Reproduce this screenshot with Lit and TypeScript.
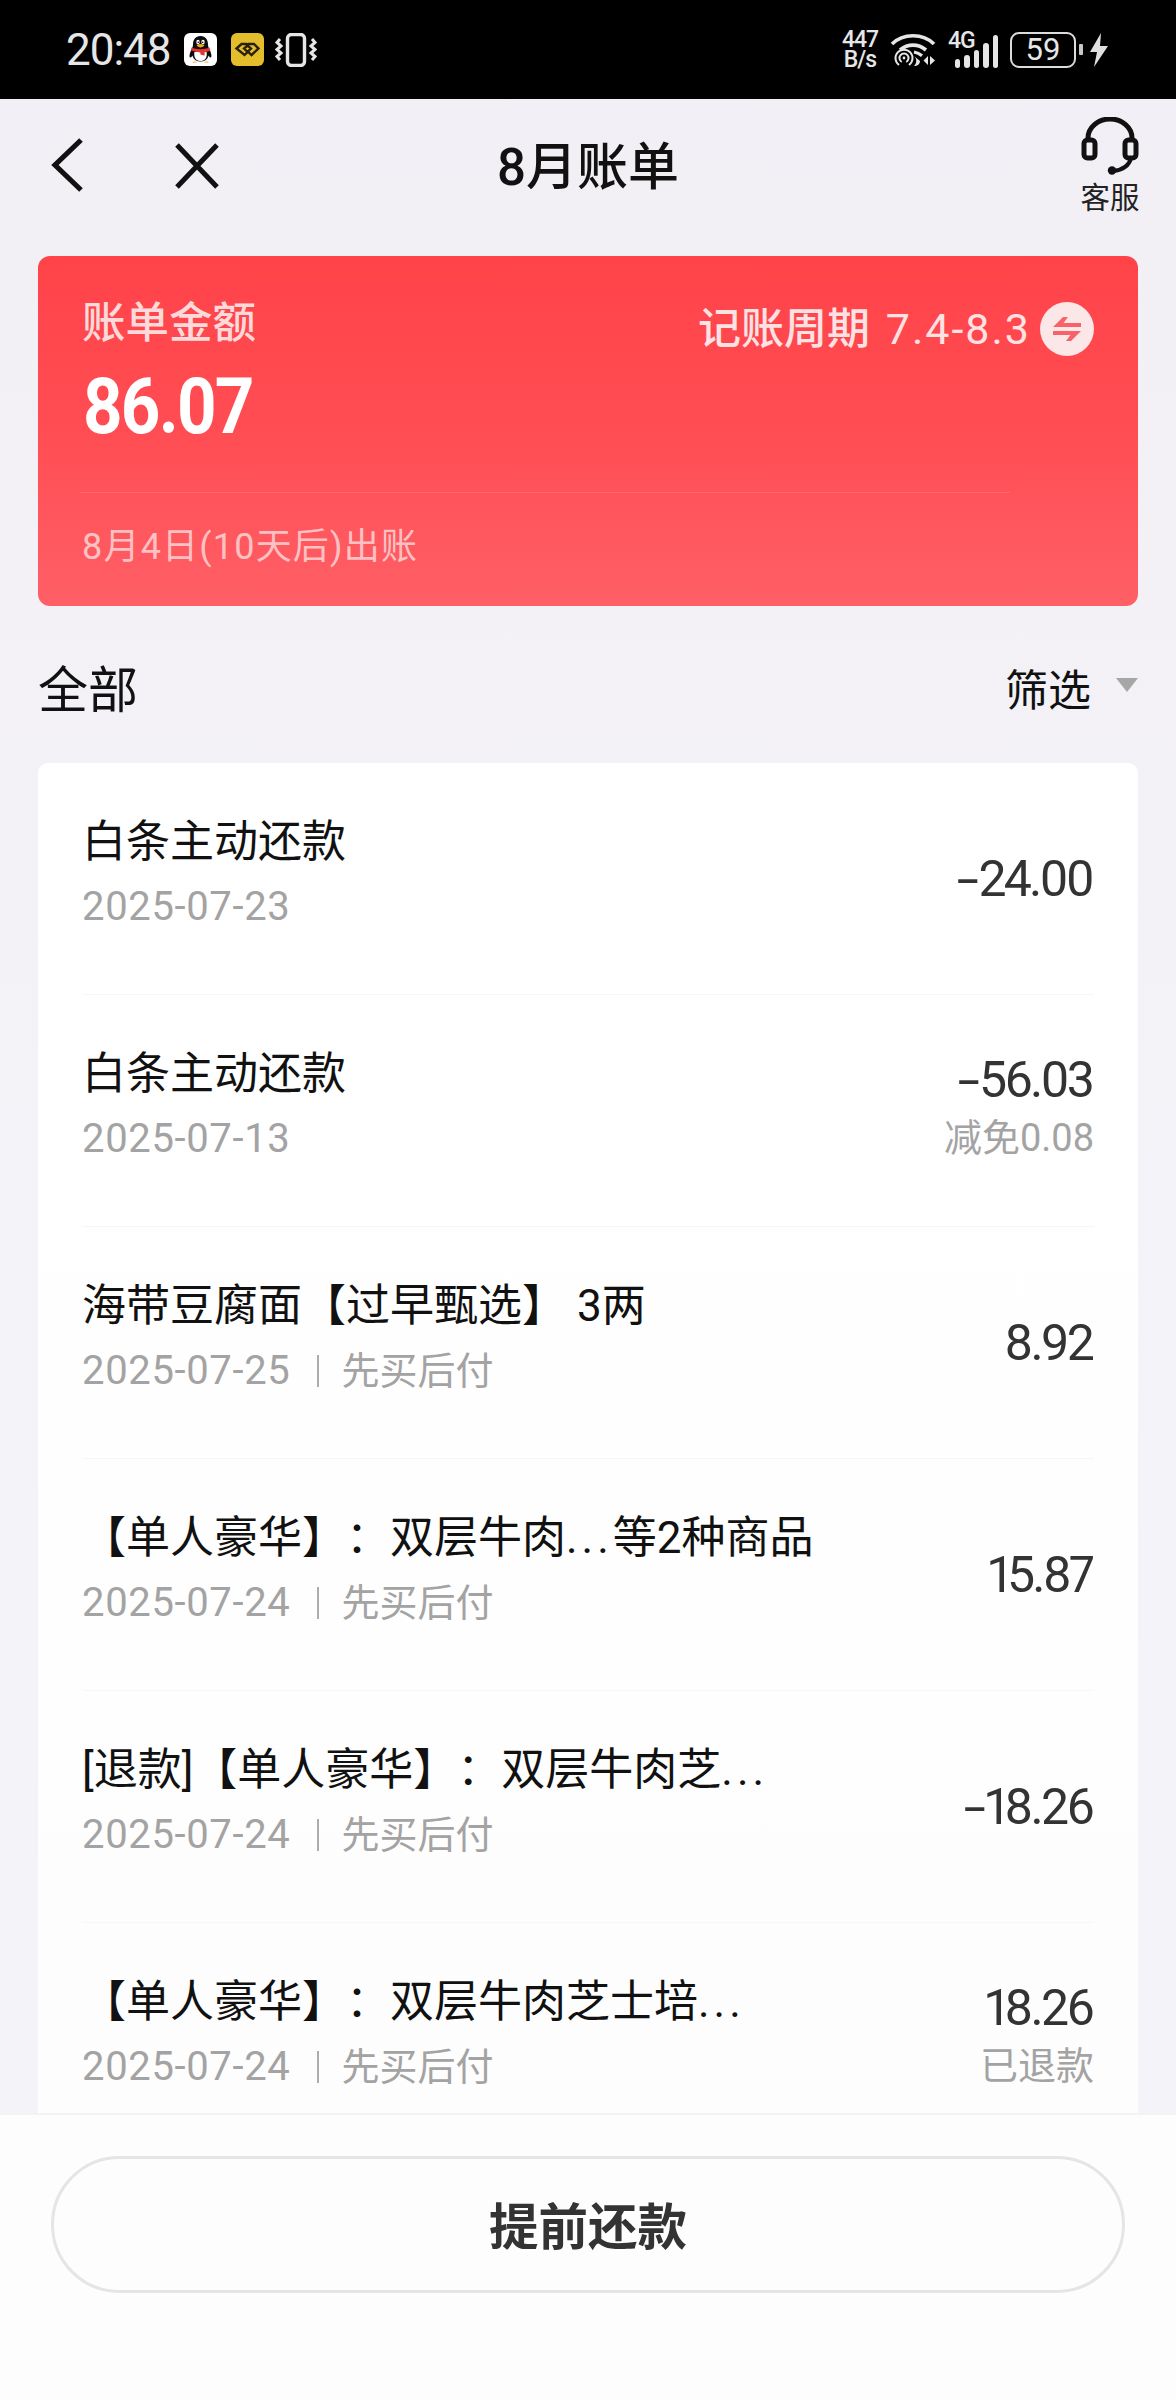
import { LitElement, html, css, svg } from "lit";
import { customElement } from "lit/decorators.js";

interface Row { title: string; date: string; tag?: string; amount: string; note?: string; }

const ROWS: Row[] = [
  { title: "白条主动还款", date: "2025-07-23", amount: "-24.00" },
  { title: "白条主动还款", date: "2025-07-13", amount: "-56.03", note: "减免0.08" },
  { title: "海带豆腐面【过早甄选】 3两", date: "2025-07-25", tag: "先买后付", amount: "8.92" },
  { title: "【单人豪华】：双层牛肉...等2种商品", date: "2025-07-24", tag: "先买后付", amount: "15.87" },
  { title: "[退款]【单人豪华】：双层牛肉芝...", date: "2025-07-24", tag: "先买后付", amount: "-18.26" },
  { title: "【单人豪华】：双层牛肉芝士培...", date: "2025-07-24", tag: "先买后付", amount: "18.26", note: "已退款" },
];

const qq = svg`<svg width="33" height="33" viewBox="0 0 33 33">
  <rect width="33" height="33" rx="6" fill="#fff"/>
  <path d="M16.5 3c-5 0-7.5 4-7.5 8.500 0 2-.6 3-2 6-1.500 3.500-2 6.500-.8 7 .8.300 1.800-1 2.300-2 .5 2 1.500 3.600 3 4.800 3 1.700 7 1.700 10 0 1.500-1.200 2.500-2.800 3-4.800.5 1 1.500 2.300 2.300 2 1.200-.5.7-3.500-.8-7-1.400-3-2-4-2-6C24 7 21.500 3 16.500 3z" fill="#0b0b0f"/>
  <path d="M10.500 19c-1 4 .5 9 6 9s7-5 6-9z" fill="#fff"/>
  <path d="M7.500 14.500c5 2.200 13 2.200 18 0l.8 3c-2 1-4 1.600-5.800 1.800l.2 3.200-4-.8-.5-2.300c-3.500-.2-6.500-.8-9.300-2.100z" fill="#e5352c"/>
  <ellipse cx="14" cy="9" rx="1.700" ry="2.300" fill="#fff"/><ellipse cx="19" cy="9" rx="1.700" ry="2.300" fill="#fff"/>
  <circle cx="14.300" cy="9.300" r=".8" fill="#000"/><circle cx="18.700" cy="9.300" r=".8" fill="#000"/>
  <path d="M12.500 12c2.500-1.200 5.500-1.200 8 0-1 1.800-2.500 2.400-4 2.400s-3-.6-4-2.400z" fill="#f3a81c"/>
  <path d="M8 29.500c1-1.500 3.500-1.500 5 0zM20 29.500c1.500-1.500 4-1.500 5 0z" fill="#f3a81c"/>
</svg>`;

const yellow = svg`<svg width="33" height="33" viewBox="0 0 33 33">
  <rect width="33" height="33" rx="6" fill="#e3bd2b"/>
  <path d="M5.500 15.500l5-4.500h5l1 1 1-1h5.500l4.500 4.500-7 6.500-3.500-3.300-3.500 3.300z M13 15.500l3.500 3.300 3.500-3.300-3.500-3z" fill="none" stroke="#2a2208" stroke-width="2.400" stroke-linejoin="miter"/>
</svg>`;

const vibrate = svg`<svg width="42" height="34" viewBox="0 0 42 34" fill="none" stroke="#e6e6e6">
  <rect x="12.500" y="1.500" width="17" height="31" rx="4" stroke-width="3.400"/>
  <path d="M5 6l-3 3.500L6 13l-4 3.500 4 3.500-4 3.500L5 27" stroke-width="3"/>
  <path d="M37 6l3 3.500-4 3.500 4 3.500-4 3.500 4 3.500L37 27" stroke-width="3"/>
</svg>`;

const wifi = svg`<svg width="46" height="36" viewBox="0 0 46 36" fill="none" stroke="#e6e6e6">
  <path d="M2 12C13 1 33 1 44 12" stroke-width="3.600"/>
  <path d="M10 18c8-6.500 18-6.500 26 0" stroke-width="3.600"/>
  <path d="M24 20c3 .6 5.500 1.700 8 3.800" stroke-width="3.200"/>
  <path d="M9 33a8.500 8.500 0 1 1 10 0" stroke-width="2"/>
  <path d="M11.800 30a4.500 4.500 0 1 1 4.400 0" stroke-width="2"/>
  <circle cx="14" cy="26" r="1.400" fill="#e6e6e6" stroke="none"/>
  <path d="M24 24c3 2.500 3 7 0 10 3.500 0 6-2 6-5z" fill="#e6e6e6" stroke="none"/>
  <path d="M38 24v9l-4.500-4.500zM40 24l5 4.500-5 4.500z" fill="#e6e6e6" stroke="none"/>
</svg>`;

const bolt = svg`<svg width="18" height="34" viewBox="0 0 18 34"><path d="M11 0L0 19h7l-3 15L18 13h-8z" fill="#e0e0e0"/></svg>`;

const back = svg`<svg width="32" height="54" viewBox="0 0 32 54" fill="none" stroke="#111" stroke-width="5.200"><path d="M30 2L4 27l26 25"/></svg>`;
const close = svg`<svg width="44" height="46" viewBox="0 0 44 46" fill="none" stroke="#111" stroke-width="5"><path d="M2 2l40 42M42 2L2 44"/></svg>`;

const headset = svg`<svg width="58" height="58" viewBox="0 0 58 58" fill="none" stroke="#111">
  <path d="M7 23V21a22 19 0 0 1 44 0v2" stroke-width="5"/>
  <rect x="3" y="23" width="11" height="18" rx="3.500" stroke-width="5"/>
  <rect x="44" y="23" width="11" height="18" rx="3.500" stroke-width="5"/>
  <path d="M50 41c-2 8-8 12-18 13" stroke-width="4"/>
  <circle cx="31" cy="53.500" r="4.200" fill="#111" stroke="none"/>
</svg>`;

const swap = svg`<svg width="54" height="54" viewBox="0 0 54 54">
  <circle cx="27" cy="27" r="27" fill="#fbe6e8"/>
  <path d="M13 25L23 15H28L23.500 21H41V25ZM41 29L31 39H26L30.500 33H13V29Z" fill="#f8636a"/>
</svg>`;

@customElement("app-root")
export class AppRoot extends LitElement {
  static styles = css`
    :host {
      display: block;
      width: 1176px;
      height: 2400px;
      overflow: hidden;
      position: relative;
      font-family: Roboto, "Noto Sans CJK SC", sans-serif;
      text-spacing-trim: space-all;
      background: linear-gradient(180deg, #f1eff5 0, #f3f1f5 500px, #f3f3f9 1400px, #f3f3f9 100%);
    }
    .status {
      height: 99px;
      background: #000;
      color: #e6e6e6;
      display: flex;
      align-items: center;
      padding: 0 68px 0 66px;
      box-sizing: border-box;
      justify-content: space-between;
    }
    .sl, .sr { display: flex; align-items: center; }
    .time { font-size: 44px; width: 118px; line-height: 34px; letter-spacing: -1px; font-weight: 400; }
    .ic1 { display: flex; }
    .ic2 { margin-left: 14px; display: flex; }
    .ic3 { margin-left: 11px; display: flex; }
    .speed {
      width: 42px; font-size: 23px; line-height: 20px; font-weight: 500;
      text-align: center; letter-spacing: -1px;
    }
    .wifi { margin-left: 9px; display: flex; }
    .sig { margin-left: 12px; position: relative; width: 50px; height: 36px; }
    .sig-t { position: absolute; left: 0; top: -2px; font-size: 23px; font-weight: 500; line-height: 22px; letter-spacing: -1px; }
    .bars { position: absolute; left: 7px; right: 0; bottom: 0; display: flex; gap: 4px; align-items: flex-end; }
    .bars i { width: 5.500px; background: #e6e6e6; border-radius: 3px; display: block; }
    .bar1 { height: 9px; } .bar2 { height: 13px; } .bar3 { height: 18px; } .bar4 { height: 25px; } .bar5 { height: 33px; }
    .bat {
      margin-left: 12px; width: 66px; height: 36px; box-sizing: border-box; border: 2.500px solid #dcdcdc;
      border-radius: 9px; display: flex; align-items: center; justify-content: center;
      font-size: 31px; line-height: 30px; color: #e6e6e6;
    }
    .nub { width: 4px; height: 11px; background: #c8c8c8; margin-left: 3px; border-radius: 1px; }
    .bolt { margin-left: 7px; display: flex; }

    .nav { height: 157px; display: flex; align-items: flex-start; position: relative; }
    .nav-back { display: flex; margin: 39px 0 0 51px; }
    .nav-close { display: flex; margin: 44px 0 0 92px; }
    .nav-title {
      position: absolute; left: 0; right: 0; top: 41px; text-align: center;
      font-size: 51px; line-height: 56px; font-weight: 500; color: #111;
    }
    .nav-help {
      position: absolute; right: 36px; top: 18px; width: 60px; display: flex; flex-direction: column; align-items: center;
      font-size: 29.500px; line-height: 40px; color: #222;
    }
    .nav-help svg { display: block; }
    .nav-help span { margin-top: 3px; white-space: nowrap; }

    .summary {
      margin: 0 38px; height: 350px; box-sizing: border-box; border-radius: 12px;
      background: linear-gradient(180deg, #ff4349 0, #ff4d53 50%, #ff5f66 100%);
      padding: 44px 45px 0; position: relative; color: #fff;
    }
    .sum-top { display: flex; justify-content: space-between; align-items: flex-start; }
    .sum-label { font-size: 43.500px; line-height: 50px; color: #fdd9da; margin: -1px 0 0 -1px; font-weight: 500; }
    .cycle { display: flex; align-items: center; font-size: 43px; line-height: 54px; color: #fde2e3; margin-top: 2px; gap: 9px; margin-right: -1px; font-weight: 500; }
    .cycle > span { white-space: nowrap; }
    .cycle b { font-weight: 400; letter-spacing: 2px; margin-left: 5px; }
    .cycle svg { display: block; }
    .sum-amt {
      font-size: 78px; font-weight: 700; line-height: 80px; letter-spacing: -2px; margin-top: 11px;
      transform: scaleX(.885); transform-origin: left center;
    }
    .sum-rule { height: 1px; background: rgba(255,255,255,.12); margin: 45px 0 0 -3px; width: 930px; }
    .sum-due { font-size: 36px; line-height: 44px; color: #fdc1c4; margin: 32px 0 0 -1px; letter-spacing: 1.200px; }

    .filter { display: flex; justify-content: space-between; align-items: center; height: 157px; margin: 0 38px; color: #111; box-sizing: border-box; padding-top: 2px; }
    .filter-all { font-size: 50px; }
    .filter-r { display: flex; align-items: center; font-size: 43px; padding-top: 2px; }
    .tri { width: 0; height: 0; border-left: 11px solid transparent; border-right: 11px solid transparent; border-top: 14px solid #a6a6a6; margin: -3px 0 0 25px; }

    .list { margin: 0 38px; background: linear-gradient(180deg, #fff, #fdfdfd); border-radius: 10px; height: 1500px; }
    .row {
      height: 232px; box-sizing: border-box; margin: 0 44px; display: flex; justify-content: space-between;
      align-items: center; border-bottom: 1px solid #f6f6f7;
    }
    .left { display: flex; flex-direction: column; min-width: 0; transform: translateY(-6px); }
    .title { font-size: 44px; line-height: 56px; color: #111; white-space: pre; }
    .dots { letter-spacing: 4px; }
    .meta { font-size: 40px; line-height: 50px; color: #a3a3a3; margin-top: 12px; display: flex; align-items: center; white-space: nowrap; letter-spacing: .65px; }
    .sep { width: 2px; height: 32px; background: #adadad; margin: 0 22px 0 27px; }
    .tag { font-size: 38px; letter-spacing: 0; }
    .right { display: flex; flex-direction: column; align-items: flex-end; }
    .right.two { transform: translateY(-4px); }
    .amt { font-size: 50px; line-height: 56px; color: #333; letter-spacing: -2.800px; font-feature-settings: "pnum"; margin-right: 2px; }
    .minus { display: inline-block; transform: scaleX(1.6); margin: 0 7px 0 3px; }
    .note { font-size: 38px; line-height: 46px; color: #a3a3a3; margin-top: 7px; }

    .foot {
      position: absolute; left: 0; right: 0; bottom: 0; height: 287px; box-sizing: border-box;
      background: #fdfdfd; border-top: 2px solid #f3f3f3; padding: 41px 51px 0;
    }
    .btn {
      height: 137px; box-sizing: border-box; border: 3px solid #e5e5e5; border-radius: 69px; padding-bottom: 3px;
      display: flex; align-items: center; justify-content: center;
      font-size: 49.500px; font-weight: 700; color: #333;
    }
  `;

  private renderTitle(t: string) {
    const i = t.indexOf("...");
    if (i < 0) return t;
    return html`${t.slice(0, i)}<span class="dots">...</span>${t.slice(i + 3)}`;
  }

  private renderAmount(a: string) {
    return a.startsWith("-") ? html`<span class="minus">-</span>${a.slice(1)}` : a;
  }

  private renderRow(r: Row) {
    return html`<div class="row">
      <div class="left">
        <div class="title">${this.renderTitle(r.title)}</div>
        <div class="meta"><span>${r.date}</span>${r.tag
          ? html`<i class="sep"></i><span class="tag">${r.tag}</span>`
          : ""}</div>
      </div>
      <div class="right ${r.note ? "two" : ""}">
        <div class="amt">${this.renderAmount(r.amount)}</div>
        ${r.note ? html`<div class="note">${r.note}</div>` : ""}
      </div>
    </div>`;
  }

  render() {
    return html`
      <div class="status">
        <div class="sl">
          <div class="time">20:48</div>
          <span class="ic1">${qq}</span>
          <span class="ic2">${yellow}</span>
          <span class="ic3">${vibrate}</span>
        </div>
        <div class="sr">
          <div class="speed">447<br />B/s</div>
          <span class="wifi">${wifi}</span>
          <div class="sig">
            <span class="sig-t">4G</span>
            <div class="bars">
              <i class="bar1"></i><i class="bar2"></i><i class="bar3"></i><i class="bar4"></i><i class="bar5"></i>
            </div>
          </div>
          <div class="bat">59</div>
          <i class="nub"></i>
          <span class="bolt">${bolt}</span>
        </div>
      </div>
      <div class="nav">
        <span class="nav-back">${back}</span>
        <span class="nav-close">${close}</span>
        <div class="nav-title">8月账单</div>
        <div class="nav-help">${headset}<span>客服</span></div>
      </div>
      <div class="summary">
        <div class="sum-top">
          <div class="sum-label">账单金额</div>
          <div class="cycle"><span>记账周期 <b>7.4-8.3</b></span>${swap}</div>
        </div>
        <div class="sum-amt">86.07</div>
        <div class="sum-rule"></div>
        <div class="sum-due">8月4日(10天后)出账</div>
      </div>
      <div class="filter">
        <div class="filter-all">全部</div>
        <div class="filter-r">筛选<i class="tri"></i></div>
      </div>
      <div class="list">${ROWS.map((r) => this.renderRow(r))}</div>
      <div class="foot"><div class="btn">提前还款</div></div>
    `;
  }
}
